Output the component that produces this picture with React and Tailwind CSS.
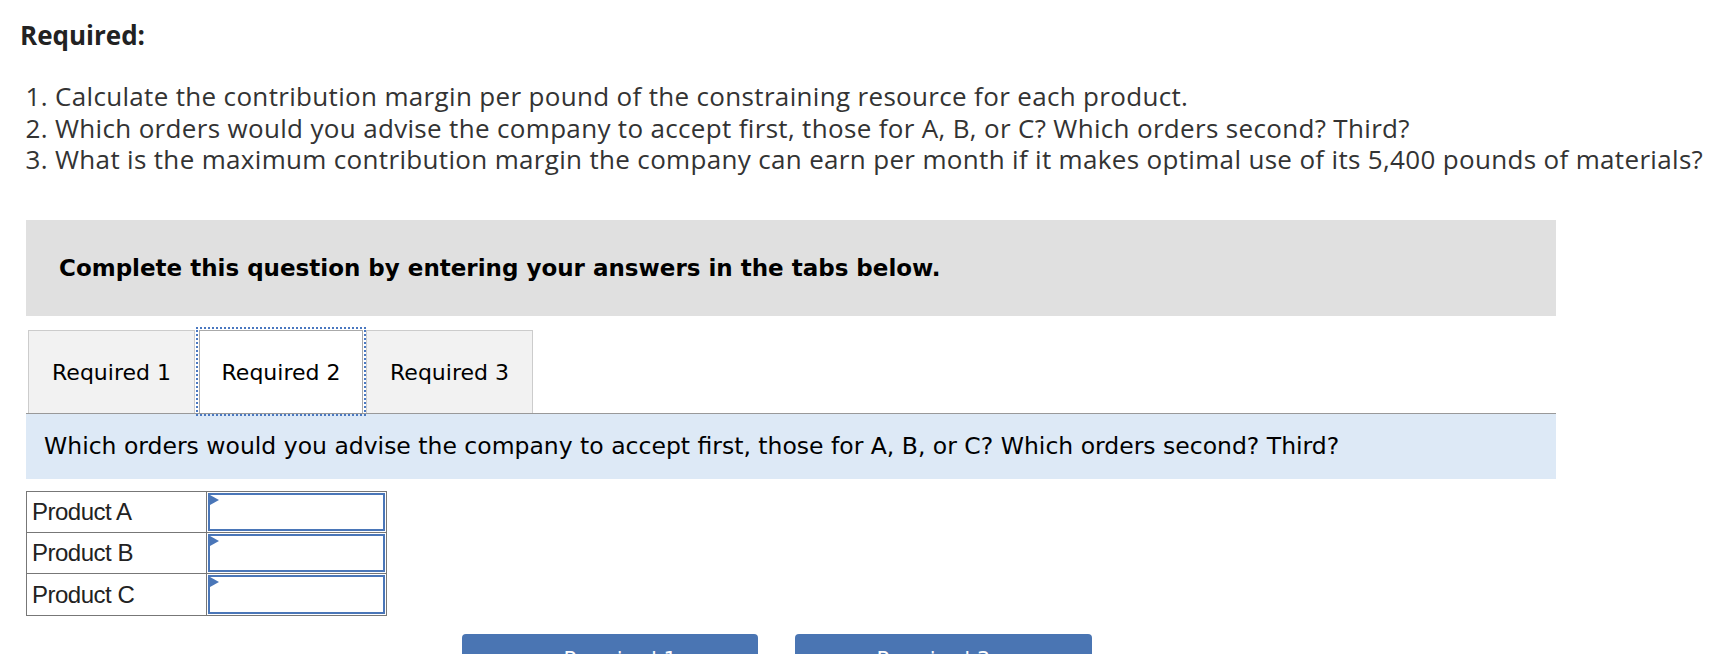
import React from "react";

const verdana = { fontFamily: '"DejaVu Sans", Verdana, sans-serif' };

function Tab({ label, active, className = "" }) {
    return (
        <div
            className={
                "h-[83px] flex items-center justify-center border border-b-0 text-[22px] text-black " +
                (active
                    ? "relative z-10 bg-white border-[#aaaaaa] outline-2 outline-dotted outline-offset-1 outline-[#4a78c0] "
                    : "bg-[#f2f2f2] border-[#cccccc] ") +
                className
            }
        >
            {label}
        </div>
    );
}

function AnswerRow({ name, last }) {
    return (
        <div className={"flex h-[41px] " + (last ? "" : "border-b border-[#777777]")}>
            <div className="w-[180px] border-r border-[#777777] pl-[5px] flex items-center text-[24px] text-[#222222] tracking-[-0.5px]" style={{ fontFamily: '"Liberation Sans", Arial, sans-serif' }}>
                {name}
            </div>
            <div className="flex-1 p-[1px]">
                <div className="relative h-full border-2 border-[#4a76b8] bg-white">
                    <span className="absolute left-0 top-0 w-0 h-0 border-t-[5px] border-b-[5px] border-l-[9px] border-t-transparent border-b-transparent border-l-[#4a76b8]"></span>
                </div>
            </div>
        </div>
    );
}

export default function App() {
    return (
        <div className="w-[1710px] h-[654px] overflow-hidden bg-white">
            <div className="pt-[19px] pl-[20px]" style={{ fontFamily: '"Open Sans", Lato, sans-serif' }}>
                <h2 className="text-[26px] font-bold leading-[32px] text-[#222222]">Required:</h2>
                <ol className="mt-[30px] list-decimal pl-[35px] text-[26px] leading-[31.7px] tracking-[0.33px] text-[#333333]">
                    <li>Calculate the contribution margin per pound of the constraining resource for each product.</li>
                    <li>Which orders would you advise the company to accept first, those for A, B, or C? Which orders second? Third?</li>
                    <li className="whitespace-nowrap">What is the maximum contribution margin the company can earn per month if it makes optimal use of its 5,400 pounds of materials?</li>
                </ol>
            </div>

            <div className="ml-[26px] w-[1530px] mt-[44px]" style={verdana}>
                <div className="h-[96px] bg-[#e0e0e0] flex items-center pl-[33px]">
                    <p className="text-[23px] font-bold text-black">Complete this question by entering your answers in the tabs below.</p>
                </div>

                <div className="mt-[14px] flex items-end pl-[2px] border-b border-[#999999]">
                    <Tab label="Required 1" className="w-[167px]" />
                    <Tab label="Required 2" active className="w-[164px] ml-[4px]" />
                    <Tab label="Required 3" className="w-[167px] ml-[3px]" />
                </div>

                <div className="h-[65px] bg-[#dde9f6] flex items-center pl-[18px]">
                    <p className="text-[23.5px] text-black">Which orders would you advise the company to accept first, those for A, B, or C? Which orders second? Third?</p>
                </div>

                <div className="mt-[12px] w-[361px] border border-[#777777]">
                    <AnswerRow name="Product A" />
                    <AnswerRow name="Product B" />
                    <AnswerRow name="Product C" last />
                </div>

                <div className="mt-[18px] ml-[436px] flex gap-[37px]">
                    <button className="w-[296px] h-[56px] rounded-[4px] bg-[#4a75b3] text-white text-[21px] leading-[24px] flex items-start justify-center gap-3 pt-[14px]">
                        <span>‹</span> Required 1
                    </button>
                    <button className="w-[297px] h-[56px] rounded-[4px] bg-[#4a75b3] text-white text-[21px] leading-[24px] flex items-start justify-center gap-3 pt-[14px]">
                        Required 3 <span>›</span>
                    </button>
                </div>
            </div>
        </div>
    );
}
